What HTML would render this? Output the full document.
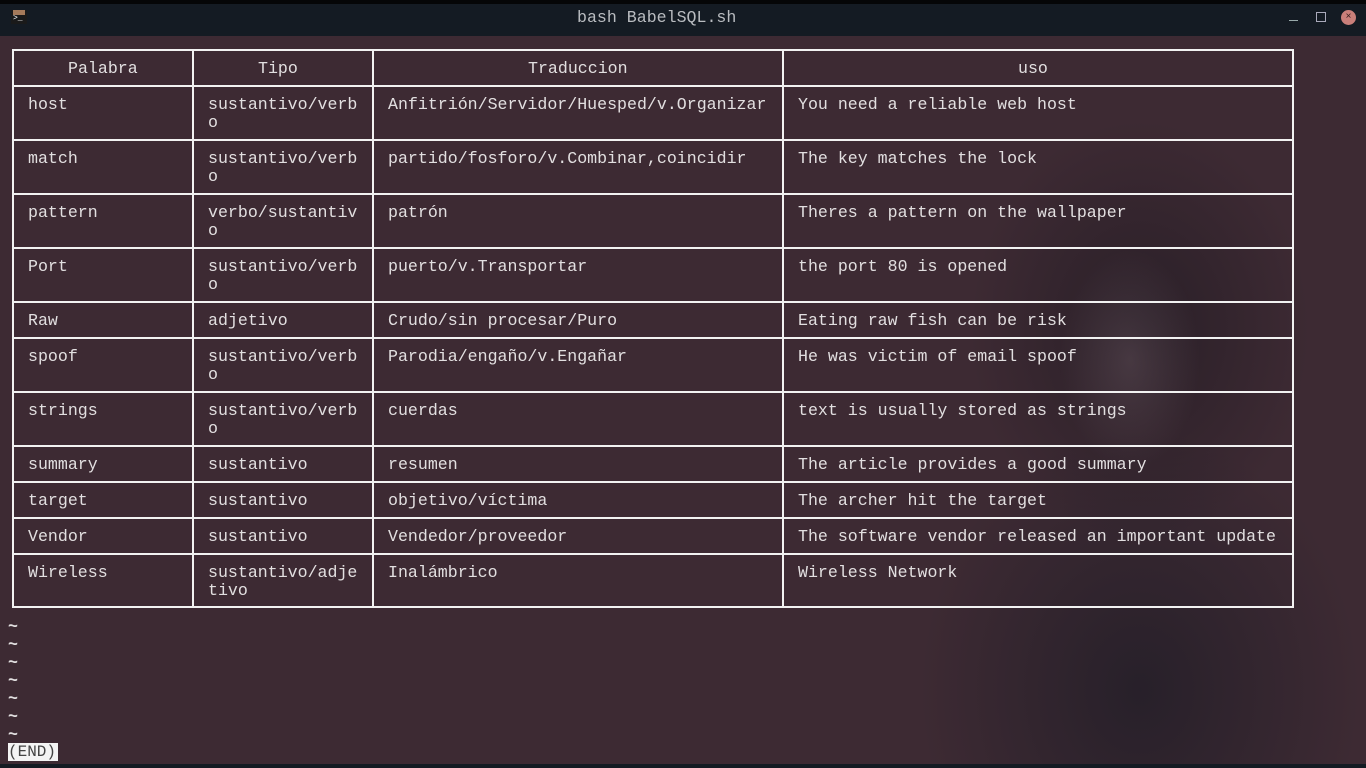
<!DOCTYPE html>
<html><head><meta charset="utf-8"><style>
*{margin:0;padding:0;box-sizing:border-box}
body{width:1366px;height:768px;overflow:hidden;background:#3d2a33;position:relative;font-family:"Liberation Mono","DejaVu Sans Mono",monospace;font-size:16.6px;color:#e2dfe0}
#top{position:absolute;left:0;top:0;width:1366px;height:4px;background:#050607}
#bar{position:absolute;left:0;top:4px;width:1366px;height:32px;background:#141b23}
#title{position:absolute;left:577px;top:4px;line-height:28px;color:#b9bcc0;font-family:"Liberation Mono",monospace;font-size:16.6px;white-space:pre}
#bg{position:absolute;left:900px;top:36px;width:466px;height:732px;background:
radial-gradient(ellipse 70px 110px at 1130px 360px,rgba(120,100,110,.35),transparent),
radial-gradient(ellipse 170px 210px at 1140px 330px,rgba(25,22,30,.55),transparent),
radial-gradient(ellipse 220px 260px at 1140px 690px,rgba(30,28,38,.7),transparent);background-attachment:fixed}
.h{position:absolute;background:#f2f2f2;height:2px;left:12px;width:1282px}
.v{position:absolute;background:#f2f2f2;width:2px;top:49px;height:559px}
.c{position:absolute;line-height:18px;white-space:pre;margin-top:1px}
.t{position:absolute;left:8px;font-weight:bold;line-height:18px;margin-top:1px}
#end{position:absolute;left:8px;top:743px;height:18px;width:50px;background:#f4f4f4;color:#444;line-height:18px;font-size:16px}
#foot{position:absolute;left:0;top:764px;width:1366px;height:4px;background:#141b23}
</style></head><body>
<div id="top"></div><div id="bar"></div><div id="bg"></div>
<div id="title">bash BabelSQL.sh</div>
<div style="position:absolute;left:11px;top:10px;width:16px;height:14px;background:#1a1a1a"><div style="position:absolute;left:2px;top:0;width:12px;height:5px;background:#a57a5a"></div><div style="color:#fff;font-size:8px;position:absolute;top:5px;left:2px;line-height:8px">&gt;_</div></div>
<div style="position:absolute;left:1289px;top:20px;width:9px;height:1px;background:#9aa"></div>
<div style="position:absolute;left:1316px;top:12px;width:10px;height:10px;border:1px solid #aab"></div>
<div style="position:absolute;left:1341px;top:10px;width:15px;height:15px;border-radius:50%;background:#c97f7a;color:#3a2020;font-size:10px;line-height:15px;text-align:center">×</div>

<div class="h" style="top:49px"></div><div class="h" style="top:85px"></div><div class="h" style="top:139px"></div><div class="h" style="top:193px"></div><div class="h" style="top:247px"></div><div class="h" style="top:301px"></div><div class="h" style="top:337px"></div><div class="h" style="top:391px"></div><div class="h" style="top:445px"></div><div class="h" style="top:481px"></div><div class="h" style="top:517px"></div><div class="h" style="top:553px"></div><div class="h" style="top:606px"></div>
<div class="v" style="left:12px"></div><div class="v" style="left:192px"></div><div class="v" style="left:372px"></div><div class="v" style="left:782px"></div><div class="v" style="left:1292px"></div>

<div class="c" style="left:68px;top:59px">Palabra</div>
<div class="c" style="left:258px;top:59px">Tipo</div>
<div class="c" style="left:528px;top:59px">Traduccion</div>
<div class="c" style="left:1018px;top:59px">uso</div>

<div class="c" style="left:28px;top:95px">host</div><div class="c" style="left:208px;top:95px">sustantivo/verb
o</div><div class="c" style="left:388px;top:95px">Anfitrión/Servidor/Huesped/v.Organizar</div><div class="c" style="left:798px;top:95px">You need a reliable web host</div>
<div class="c" style="left:28px;top:149px">match</div><div class="c" style="left:208px;top:149px">sustantivo/verb
o</div><div class="c" style="left:388px;top:149px">partido/fosforo/v.Combinar,coincidir</div><div class="c" style="left:798px;top:149px">The key matches the lock</div>
<div class="c" style="left:28px;top:203px">pattern</div><div class="c" style="left:208px;top:203px">verbo/sustantiv
o</div><div class="c" style="left:388px;top:203px">patrón</div><div class="c" style="left:798px;top:203px">Theres a pattern on the wallpaper</div>
<div class="c" style="left:28px;top:257px">Port</div><div class="c" style="left:208px;top:257px">sustantivo/verb
o</div><div class="c" style="left:388px;top:257px">puerto/v.Transportar</div><div class="c" style="left:798px;top:257px">the port 80 is opened</div>
<div class="c" style="left:28px;top:311px">Raw</div><div class="c" style="left:208px;top:311px">adjetivo</div><div class="c" style="left:388px;top:311px">Crudo/sin procesar/Puro</div><div class="c" style="left:798px;top:311px">Eating raw fish can be risk</div>
<div class="c" style="left:28px;top:347px">spoof</div><div class="c" style="left:208px;top:347px">sustantivo/verb
o</div><div class="c" style="left:388px;top:347px">Parodia/engaño/v.Engañar</div><div class="c" style="left:798px;top:347px">He was victim of email spoof</div>
<div class="c" style="left:28px;top:401px">strings</div><div class="c" style="left:208px;top:401px">sustantivo/verb
o</div><div class="c" style="left:388px;top:401px">cuerdas</div><div class="c" style="left:798px;top:401px">text is usually stored as strings</div>
<div class="c" style="left:28px;top:455px">summary</div><div class="c" style="left:208px;top:455px">sustantivo</div><div class="c" style="left:388px;top:455px">resumen</div><div class="c" style="left:798px;top:455px">The article provides a good summary</div>
<div class="c" style="left:28px;top:491px">target</div><div class="c" style="left:208px;top:491px">sustantivo</div><div class="c" style="left:388px;top:491px">objetivo/víctima</div><div class="c" style="left:798px;top:491px">The archer hit the target</div>
<div class="c" style="left:28px;top:527px">Vendor</div><div class="c" style="left:208px;top:527px">sustantivo</div><div class="c" style="left:388px;top:527px">Vendedor/proveedor</div><div class="c" style="left:798px;top:527px">The software vendor released an important update</div>
<div class="c" style="left:28px;top:563px">Wireless</div><div class="c" style="left:208px;top:563px">sustantivo/adje
tivo</div><div class="c" style="left:388px;top:563px">Inalámbrico</div><div class="c" style="left:798px;top:563px">Wireless Network</div>

<div class="t" style="top:617px">~</div><div class="t" style="top:635px">~</div><div class="t" style="top:653px">~</div><div class="t" style="top:671px">~</div><div class="t" style="top:689px">~</div><div class="t" style="top:707px">~</div><div class="t" style="top:725px">~</div>
<div id="end">(END)</div>
<div id="foot"></div>
</body></html>
